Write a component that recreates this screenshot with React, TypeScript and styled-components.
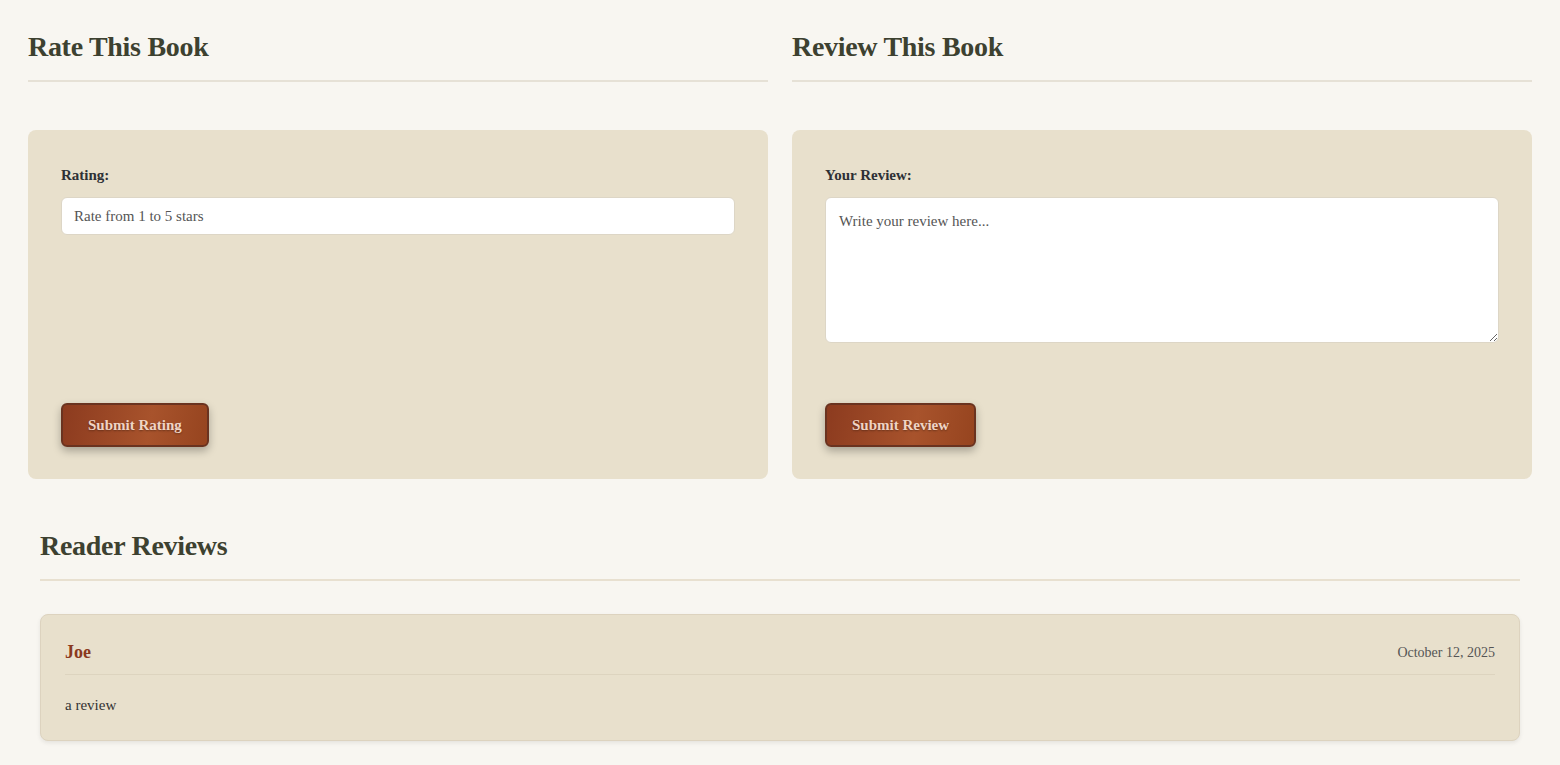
import styled, { createGlobalStyle } from 'styled-components'

const GlobalStyle = createGlobalStyle`
  html, body {
    margin: 0;
    padding: 0;
    background-color: #f8f6f1;
    font-family: "Liberation Serif", "DejaVu Serif", serif;
    color: #2d3035;
  }
  * {
    box-sizing: border-box;
  }
`

const Page = styled.div`
  padding: 29px 28px 24px;
`

const Columns = styled.div`
  display: grid;
  grid-template-columns: 1fr 1fr;
  gap: 24px;
`

const Column = styled.section`
  display: flex;
  flex-direction: column;
`

const SectionTitle = styled.h2`
  margin: 0 0 48px;
  padding-bottom: 15px;
  border-bottom: 2px solid #e6e1d6;
  font-size: 28px;
  line-height: 36px;
  font-weight: 700;
  color: #3d4130;
  letter-spacing: -0.3px;
`

const Card = styled.div`
  flex: 1;
  display: flex;
  flex-direction: column;
  background-color: #e8e0cc;
  border-radius: 8px;
  padding: 35px 33px 32px;
`

const FormGroup = styled.div`
  display: flex;
  flex-direction: column;
  gap: 12px;
  margin-bottom: 60px;
`

const Label = styled.label`
  font-size: 15px;
  line-height: 20px;
  font-weight: 700;
  color: #2d3035;
`

const TextInput = styled.input`
  height: 38px;
  padding: 0 12px;
  border: 1px solid #ddd6c6;
  border-radius: 6px;
  background: #fff;
  font-family: inherit;
  font-size: 15px;
  color: #333;
  &::placeholder {
    color: #555;
  }
`

const TextArea = styled.textarea`
  height: 146px;
  padding: 12px 13px;
  border: 1px solid #ddd6c6;
  border-radius: 6px;
  background: #fff;
  font-family: inherit;
  font-size: 15px;
  line-height: 22px;
  color: #333;
  resize: vertical;
  &::placeholder {
    color: #555;
  }
`

const SubmitButton = styled.button`
  margin-top: auto;
  align-self: flex-start;
  height: 44px;
  padding: 0 25px;
  border: 2px solid #6a3320;
  border-radius: 6px;
  background: linear-gradient(100deg, #8c3b1f 0%, #a8532c 60%, #96441f 100%);
  box-shadow: 0 4px 8px rgba(0, 0, 0, 0.28);
  font-family: inherit;
  font-size: 15px;
  font-weight: 700;
  color: #f0d4c4;
  text-shadow: 0 1px 2px rgba(0, 0, 0, 0.35);
  cursor: pointer;
`

const ReviewsSection = styled.section`
  padding: 49px 12px 0;
`

const ReviewsTitle = styled(SectionTitle)`
  margin-bottom: 33px;
  border-bottom-color: #e8e0d0;
`

const ReviewCard = styled.article`
  background-color: #e8e0cc;
  border: 1px solid #ddd3bf;
  border-radius: 8px;
  padding: 24px 24px;
  box-shadow: 0 2px 4px rgba(0, 0, 0, 0.08);
`

const ReviewHeader = styled.div`
  display: flex;
  justify-content: space-between;
  align-items: center;
  padding-bottom: 8px;
  border-bottom: 1px solid #ddd4bf;
  margin-bottom: 19px;
`

const Reviewer = styled.span`
  font-size: 18px;
  line-height: 27px;
  font-weight: 700;
  color: #8b3a1e;
`

const ReviewDate = styled.span`
  font-size: 14px;
  color: #555;
`

const ReviewText = styled.p`
  margin: 0;
  font-size: 15px;
  line-height: 22px;
  color: #333;
`

type Review = { name: string; date: string; text: string }

const reviews: Review[] = [
  { name: 'Joe', date: 'October 12, 2025', text: 'a review' },
]

export default function App() {
  return (
    <>
      <GlobalStyle />
      <Page>
        <Columns>
          <Column>
            <SectionTitle>Rate This Book</SectionTitle>
            <Card>
              <FormGroup>
                <Label htmlFor="rating">Rating:</Label>
                <TextInput id="rating" placeholder="Rate from 1 to 5 stars" />
              </FormGroup>
              <SubmitButton>Submit Rating</SubmitButton>
            </Card>
          </Column>
          <Column>
            <SectionTitle>Review This Book</SectionTitle>
            <Card>
              <FormGroup>
                <Label htmlFor="review">Your Review:</Label>
                <TextArea id="review" placeholder="Write your review here..." />
              </FormGroup>
              <SubmitButton>Submit Review</SubmitButton>
            </Card>
          </Column>
        </Columns>

        <ReviewsSection>
          <ReviewsTitle>Reader Reviews</ReviewsTitle>
          {reviews.map((review) => (
            <ReviewCard key={review.name + review.date}>
              <ReviewHeader>
                <Reviewer>{review.name}</Reviewer>
                <ReviewDate>{review.date}</ReviewDate>
              </ReviewHeader>
              <ReviewText>{review.text}</ReviewText>
            </ReviewCard>
          ))}
        </ReviewsSection>
      </Page>
    </>
  )
}
